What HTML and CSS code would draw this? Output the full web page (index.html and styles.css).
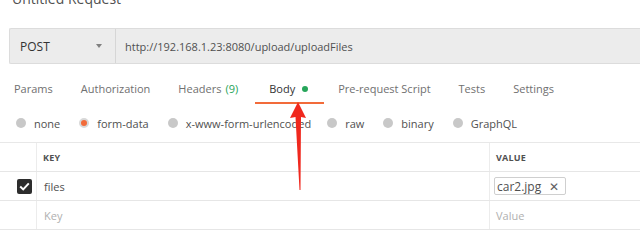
FILE: index.html
```html
<!DOCTYPE html>
<html>
<head>
<meta charset="utf-8">
<link rel="stylesheet" href="styles.css">
</head>
<body>
<div class="page">
  <div class="title">Untitled Request</div>
  <div class="urlbar">
    <div class="method">
      <span class="method-name">POST</span>
      <span class="caret"></span>
    </div>
    <div class="url">http://192.168.1.23:8080/upload/uploadFiles</div>
  </div>
  <div class="tabs">
    <div class="tab">Params</div>
    <div class="tab">Authorization</div>
    <div class="tab">Headers <span class="count">(9)</span></div>
    <div class="tab active">Body <span class="dot"></span></div>
    <div class="tab">Pre-request Script</div>
    <div class="tab">Tests</div>
    <div class="tab">Settings</div>
  </div>
  <div class="modes">
    <div class="mode"><span class="radio"></span>none</div>
    <div class="mode"><span class="radio on"></span>form-data</div>
    <div class="mode"><span class="radio"></span>x-www-form-urlencoded</div>
    <div class="mode"><span class="radio"></span>raw</div>
    <div class="mode"><span class="radio"></span>binary</div>
    <div class="mode"><span class="radio"></span>GraphQL</div>
  </div>
  <div class="table">
    <div class="row head">
      <div class="c0"></div>
      <div class="c1">KEY</div>
      <div class="c2">VALUE</div>
    </div>
    <div class="row">
      <div class="c0"><span class="check"><svg width="11" height="9" viewBox="0 0 11 9"><path d="M1.2 4.6 L4.2 7.4 L9.8 1.4" fill="none" stroke="#fff" stroke-width="2"/></svg></span></div>
      <div class="c1">files</div>
      <div class="c2"><span class="chip">car2.jpg <span class="x">✕</span></span></div>
    </div>
    <div class="row">
      <div class="c0"></div>
      <div class="c1 ph">Key</div>
      <div class="c2 ph">Value</div>
    </div>
  </div>
  <svg class="arrow" width="24" height="92" viewBox="0 0 24 92"><polygon points="10,0 2,16 7.5,15 11.5,88 12.5,88 13,15 18,16" fill="#f0281e"/></svg>
</div>
</body>
</html>
```
FILE: styles.css
```css
html, body { margin: 0; padding: 0; background: #fff; }
body { font-family: "Open Sans", "Liberation Sans", sans-serif; color: #505050; }
.page { position: relative; width: 640px; height: 247px; overflow: hidden; }
.title { font-size: 14px; line-height: 18px; margin-top: -10px; padding-left: 12px; color: #505050; height: 18px; }
.urlbar { display: flex; margin: 20px 0 0 9px; height: 34px; background: #ececec; border: 1px solid #dcdcdc; border-right: none; border-radius: 2px 0 0 2px; }
.method { width: 106px; display: flex; align-items: center; padding-left: 10px; box-sizing: border-box; border-right: 1px solid #d6d6d6; }
.method-name { font-size: 12px; color: #333; flex: 1; }
.caret { width: 0; height: 0; border-left: 3.5px solid transparent; border-right: 3.5px solid transparent; border-top: 4px solid #808080; margin-right: 13px; }
.url { display: flex; align-items: center; padding-left: 9px; font-size: 11px; color: #505050; }
.tabs { display: flex; margin-top: 12px; height: 28px; }
.tab { padding: 0 14px; font-size: 11px; line-height: 26px; color: #707070; display: flex; align-items: center; gap: 4px; border-bottom: 2px solid transparent; }
.tab:nth-child(3) { padding-right: 17px; }
.tab.active { color: #333; border-bottom-color: #f26b3a; padding-right: 16px; }
.count { color: #27a45a; }
.dot { width: 6px; height: 6px; border-radius: 50%; background: #26a55a; margin-left: 3px; }
.modes { display: flex; height: 38px; align-items: center; padding-left: 16px; gap: 19px; margin-top: 0; }
.mode { display: flex; align-items: center; gap: 8px; font-size: 11px; color: #505050; }
.mode:nth-child(3) { margin-right: -3px; }
.radio { width: 10px; height: 10px; border-radius: 50%; background: #c8c8c8; box-sizing: border-box; }
.radio.on { background: #f26b3a; border: 2px solid #d8d8d8; }
.table { border-top: 1px solid #e8e8e8; }
.row { display: flex; height: 28px; border-bottom: 1px solid #e6e6e6; }
.c0 { width: 37px; border-right: 1px solid #ececec; box-sizing: border-box; display: flex; align-items: center; justify-content: flex-end; padding-right: 4px; }
.c1 { width: 453px; border-right: 1px solid #ececec; box-sizing: border-box; display: flex; align-items: center; padding-left: 7px; font-size: 11px; color: #505050; }
.c2 { flex: 1; display: flex; align-items: center; padding-left: 4px; font-size: 11px; color: #505050; }
.head .c1, .head .c2 { font-size: 9px; font-weight: 700; letter-spacing: 0.2px; color: #505050; }
.head .c1 { padding-left: 6px; }
.head .c2 { padding-left: 6px; }
.ph { color: #b0b0b0; }
.row .c2.ph { padding-left: 6px; }
.check { width: 15px; height: 15px; background: #2d2d2d; border-radius: 2px; display: flex; align-items: center; justify-content: center; }
.chip { border: 1px solid #cfcfcf; border-radius: 2px; height: 16px; padding: 0 6px 0 2px; display: flex; align-items: center; gap: 8px; font-size: 12px; color: #505050; }
.x { font-size: 12px; color: #606060; }
.arrow { position: absolute; left: 288px; top: 102px; }
```
